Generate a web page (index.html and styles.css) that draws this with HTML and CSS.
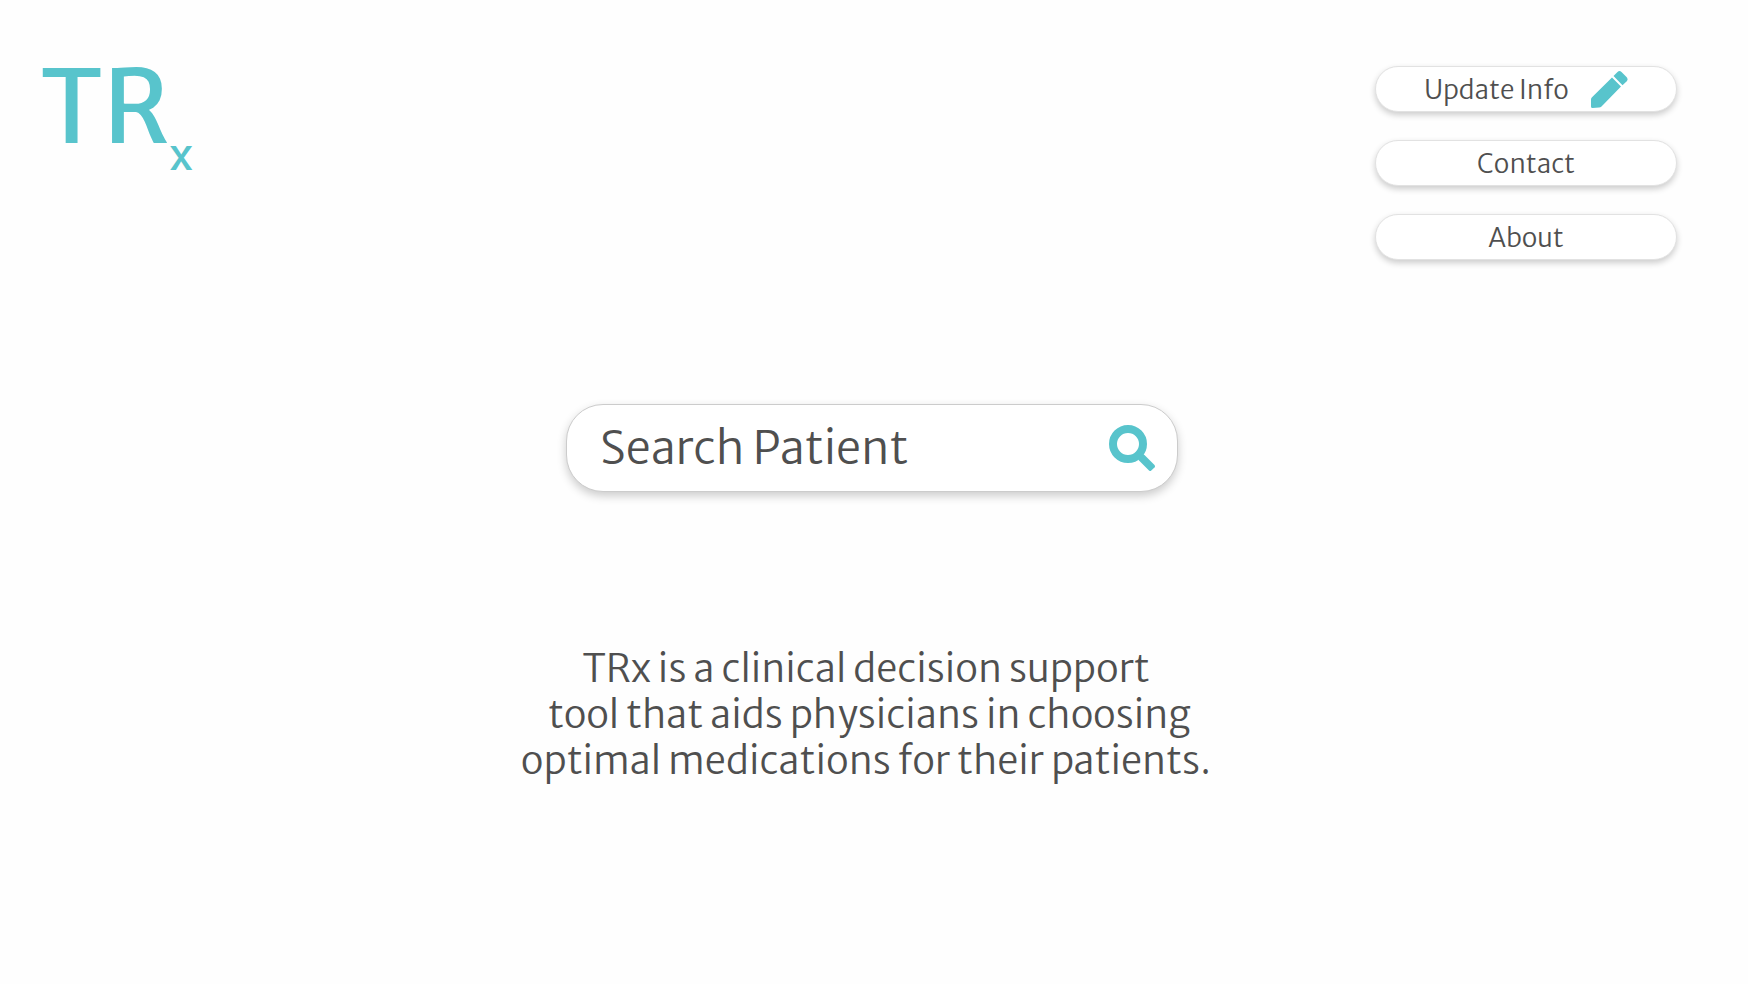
FILE: index.html
```html
<!DOCTYPE html>
<html lang="en">
  <head>
    <meta charset="UTF-8" />
    <meta name="viewport" content="width=device-width, initial-scale=1.0" />
    <title>TRx</title>
    <link rel="stylesheet" href="styles.css">
  </head>
  <body>
    <header class="header">
      <a class="logo" href="#">TR<span class="logo-x">x</span></a>

      <nav class="menu">
        <a class="menu-item" href="#update">
          Update Info
          <svg class="pencil-icon" viewBox="0 0 37 37" aria-hidden="true">
            <path d="M21 6.500 30 15.500 10.500 35.500Q9.500 36.500 8 36.500L1.500 37Q0 37 0 35.500V28.500Q0 27.200 1 26.300Z" />
            <path d="M22.500 5 26.500 1Q28.500-1 30.500 1L35.500 6Q37.500 8 35.500 10.500L31.500 14.300Z" />
          </svg>
        </a>
        <a class="menu-item" href="#contact">Contact</a>
        <a class="menu-item" href="#about">About</a>
      </nav>
    </header>

    <main class="container">
      <form class="search-box">
        <input class="search-input" type="text" placeholder="Search Patient" aria-label="Search Patient" />
        <button class="search-btn" type="submit" aria-label="Search">
          <svg class="search-icon" viewBox="0 0 46 46" aria-hidden="true">
            <circle cx="19" cy="19" r="15" />
            <path d="M30 35.500Q29 34.500 30 33L33 30Q34.500 29 35.500 30L45.500 40Q46.500 41.500 45.500 42.500L42 45.700Q41 46.500 40 45.500Z" />
          </svg>
        </button>
      </form>

      <p class="description">
        TRx is a clinical decision support<br />
        &nbsp;tool that aids physicians in choosing<br />
        optimal medications for their patients.
      </p>
    </main>
  </body>
</html>
```
FILE: styles.css
```css
* {
  box-sizing: border-box;
}

body {
  margin: 0;
  font-family: "Merriweather Sans", "Noto Sans", sans-serif;
  font-weight: 350;
  background-color: #fefefe;
  color: #4f4f4f;
}

.header {
  display: flex;
  justify-content: space-between;
  align-items: flex-start;
  padding: 66px 71px 0 40px;
}

.logo {
  display: flex;
  align-items: flex-end;
  color: #58c4cc;
  font-size: 100px;
  font-weight: 400;
  line-height: 84px;
  text-decoration: none;
}

.logo-x {
  margin: 0 0 -30px 0;
  font-size: 42px;
  line-height: 50px;
}

.menu {
  display: flex;
  flex-direction: column;
  gap: 28px;
  width: 302px;
}

.menu-item {
  display: flex;
  align-items: center;
  justify-content: center;
  gap: 22px;
  height: 46px;
  border: 1px solid #e2e2e2;
  border-radius: 23px;
  background-color: #fff;
  box-shadow: 0 3px 6px rgba(0, 0, 0, 0.2);
  color: #4f4f4f;
  font-size: 26px;
  text-decoration: none;
}

.pencil-icon {
  width: 37px;
  height: 37px;
  fill: #58c4cc;
}

.container {
  display: flex;
  flex-direction: column;
  align-items: center;
  padding: 144px 4px 0 0;
}

.search-box {
  display: flex;
  align-items: center;
  width: 612px;
  max-width: 100%;
  height: 88px;
  padding: 0 22px 0 33px;
  border: 1px solid #ccc;
  border-radius: 37px;
  background-color: #fff;
  box-shadow: 0 4px 10px rgba(0, 0, 0, 0.2);
}

.search-input {
  flex: 1;
  min-width: 0;
  padding: 0;
  border: none;
  outline: none;
  background: none;
  color: #4f4f4f;
  font-family: inherit;
  font-size: 45px;
  font-weight: 350;
}

.search-input::placeholder {
  color: #4f4f4f;
  opacity: 1;
}

.search-btn {
  display: flex;
  padding: 0;
  border: none;
  background: none;
  cursor: pointer;
}

.search-icon {
  width: 46px;
  height: 46px;
  fill: #58c4cc;
}

.search-icon circle {
  fill: none;
  stroke: #58c4cc;
  stroke-width: 8px;
}

.description {
  margin: 154px 12px 0 0;
  font-size: 38px;
  line-height: 46px;
  text-align: center;
}
```
